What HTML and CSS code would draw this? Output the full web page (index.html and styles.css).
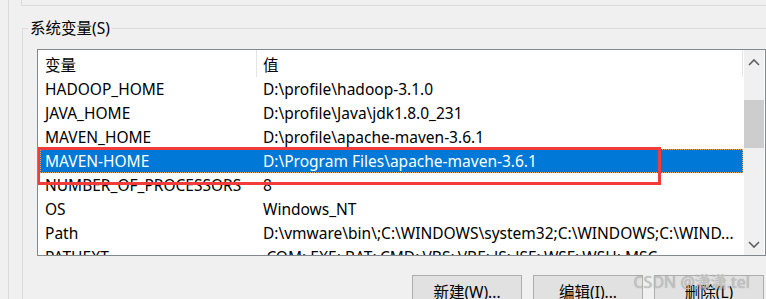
FILE: index.html
```html
<!DOCTYPE html>
<html lang="zh">
<head>
<meta charset="utf-8">
<title>系统变量</title>
<link rel="stylesheet" href="styles.css">
</head>
<body>
<div class="page">
  <div class="edge"></div>
  <div class="main">
    <div class="upper"></div>
    <fieldset class="group">
      <legend class="group-title">系统变量(S)</legend>
      <div class="listbox">
        <div class="list">
          <div class="row header">
            <div class="cell c1">变量</div>
            <div class="cell c2">值</div>
          </div>
          <div class="row"><div class="cell c1">HADOOP_HOME</div><div class="cell c2">D:\profile\hadoop-3.1.0</div></div>
          <div class="row"><div class="cell c1">JAVA_HOME</div><div class="cell c2">D:\profile\Java\jdk1.8.0_231</div></div>
          <div class="row"><div class="cell c1">MAVEN_HOME</div><div class="cell c2">D:\profile\apache-maven-3.6.1</div></div>
          <div class="row selected"><div class="cell c1">MAVEN-HOME</div><div class="cell c2">D:\Program Files\apache-maven-3.6.1</div></div>
          <div class="row"><div class="cell c1">NUMBER_OF_PROCESSORS</div><div class="cell c2">8</div></div>
          <div class="row"><div class="cell c1">OS</div><div class="cell c2">Windows_NT</div></div>
          <div class="row"><div class="cell c1">Path</div><div class="cell c2">D:\vmware\bin\;C:\WINDOWS\system32;C:\WINDOWS;C:\WIND...</div></div>
          <div class="row"><div class="cell c1">PATHEXT</div><div class="cell c2">.COM;.EXE;.BAT;.CMD;.VBS;.VBE;.JS;.JSE;.WSF;.WSH;.MSC</div></div>
        </div>
        <div class="scrollbar">
          <div class="sb-btn">
            <svg width="12" height="8" viewBox="0 0 12 8"><path d="M1 7 L6 2 L11 7" fill="none" stroke="#606060" stroke-width="1.6"/></svg>
          </div>
          <div class="sb-track">
            <div class="sb-gap"></div>
            <div class="sb-thumb"></div>
          </div>
          <div class="sb-btn">
            <svg width="12" height="8" viewBox="0 0 12 8"><path d="M1 1 L6 6 L11 1" fill="none" stroke="#606060" stroke-width="1.6"/></svg>
          </div>
        </div>
        <div class="highlight"></div>
      </div>
      <div class="buttons">
        <button class="btn">新建(W)...</button>
        <button class="btn">编辑(I)...</button>
        <button class="btn">删除(L)</button>
      </div>
    </fieldset>
  </div>
</div>
<div class="watermark">CSDN @潇潇.tel</div>
</body>
</html>
```
FILE: styles.css
```css
html, body {
  margin: 0;
  padding: 0;
}
body {
  width: 766px;
  height: 299px;
  overflow: hidden;
  background: #f0f0f0;
  font-family: "Noto Sans", "Noto Sans CJK SC", sans-serif;
  font-size: 15.5px;
  color: #000;
  position: relative;
}
.page {
  display: flex;
  width: 820px;
  height: 299px;
}
.edge {
  width: 8px;
  border-right: 1px solid #dadada;
  flex: none;
}
.main {
  flex: 1;
  padding-left: 12px;
}
.upper {
  height: 5px;
  border-left: 1px solid #dcdcdc;
  border-bottom: 1px solid #dcdcdc;
}
.group {
  margin: 11px 0 0 1px;
  padding: 10px 0 0 14px;
  border: 1px solid #dcdcdc;
  height: 400px;
  min-width: 0;
}
.group-title {
  margin-left: -9px;
  padding: 0 2px;
  line-height: 22px;
  height: 22px;
}
.listbox {
  position: relative;
  width: 727px;
  height: 205px;
  border: 1px solid #828790;
  background: #fff;
  display: flex;
  overflow: hidden;
}
.list {
  width: 703px;
  padding-left: 2px;
  flex: none;
}
.row {
  display: grid;
  grid-template-columns: 217px 1fr;
  height: 24px;
  line-height: 24px;
  white-space: nowrap;
}
.cell {
  overflow: hidden;
  text-overflow: ellipsis;
}
.c1 { padding-left: 5px; }
.c2 { padding-left: 6px; }
.header {
  height: 27px;
}
.header .cell {
  padding-top: 3px;
  line-height: 24px;
}
.header .c1 {
  border-right: 1px solid #e5e5e5;
}
.header .c2 {
  border-right: 1px solid #e5e5e5;
}
.selected {
  background: #0078d7;
  color: #fff;
  outline: 1px dotted #e0a860;
  outline-offset: -1px;
}
.scrollbar {
  width: 20px;
  margin: 0 1px 0 1px;
  background: #f0f0f0;
  display: flex;
  flex-direction: column;
  flex: none;
}
.sb-btn {
  height: 20px;
  display: flex;
  align-items: center;
  justify-content: center;
  flex: none;
}
.sb-btn:first-child {
  height: 24px;
}
.sb-track {
  flex: 1;
  display: flex;
  flex-direction: column;
}
.sb-gap {
  height: 26px;
}
.sb-thumb {
  height: 48px;
  background: #cdcdcd;
}
.highlight {
  position: absolute;
  left: -1px;
  top: 97px;
  width: 624px;
  height: 38px;
  box-sizing: border-box;
  border: 3px solid #f23c3c;
  pointer-events: none;
}
.buttons {
  width: 727px;
  display: flex;
  justify-content: flex-end;
  gap: 11px;
  margin-top: 19px;
  padding-right: 2px;
}
.btn {
  width: 110px;
  height: 30px;
  background: #e1e1e1;
  border: 1px solid #adadad;
  font-family: "Noto Sans", "Noto Sans CJK SC", sans-serif;
  font-size: 15.5px;
  color: #000;
  padding: 4px 0 0;
  line-height: 22px;
  text-align: center;
}
.watermark {
  position: absolute;
  right: 16px;
  top: 269px;
  font-size: 16px;
  color: rgba(200, 200, 200, 0.9);
  text-shadow: 0 0 1px rgba(0, 0, 0, 0.35);
  white-space: nowrap;
}
```
